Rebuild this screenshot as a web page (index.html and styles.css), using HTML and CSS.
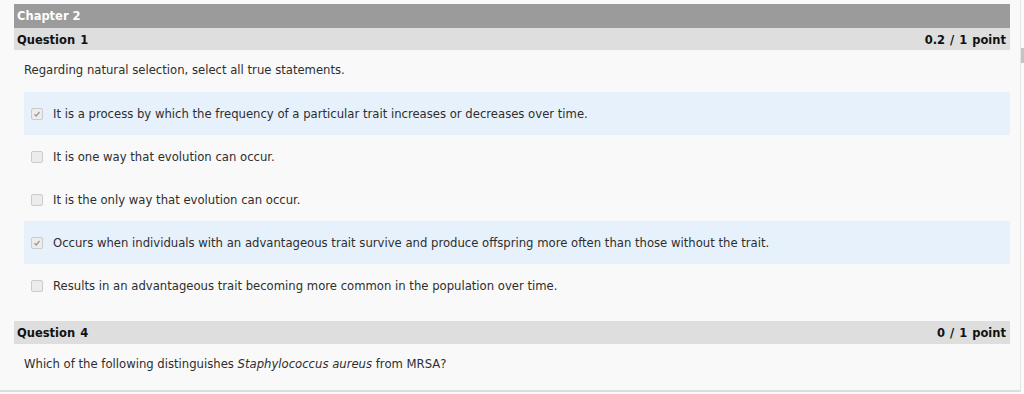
FILE: index.html
```html
<!DOCTYPE html>
<html lang="en">
<head>
    <meta charset="UTF-8">
    <title>Chapter 2 - Quiz</title>
    <link rel="stylesheet" href="styles.css">
</head>
<body>
    <div class="page">
        <div class="panel">
            <div class="chapter">Chapter 2</div>

            <div class="qhead">
                <span>Question 1</span>
                <span>0.2 / 1 point</span>
            </div>
            <p class="prompt">Regarding natural selection, select all true statements.</p>
            <div class="options">
                <div class="opt picked">
                    <span class="box"><svg viewBox="0 0 12 12"><path d="M3 6.2 L5 8.3 L9 3.6" /></svg></span>
                    It is a process by which the frequency of a particular trait increases or decreases over time.
                </div>
                <div class="opt">
                    <span class="box"></span>
                    It is one way that evolution can occur.
                </div>
                <div class="opt">
                    <span class="box"></span>
                    It is the only way that evolution can occur.
                </div>
                <div class="opt picked">
                    <span class="box"><svg viewBox="0 0 12 12"><path d="M3 6.2 L5 8.3 L9 3.6" /></svg></span>
                    Occurs when individuals with an advantageous trait survive and produce offspring more often than those without the trait.
                </div>
                <div class="opt">
                    <span class="box"></span>
                    Results in an advantageous trait becoming more common in the population over time.
                </div>
            </div>

            <div class="qhead q4">
                <span>Question 4</span>
                <span>0 / 1 point</span>
            </div>
            <p class="prompt">Which of the following distinguishes <i>Staphylococcus aureus</i> from MRSA?</p>
        </div>
        <div class="track"><div class="thumb"></div></div>
    </div>
</body>
</html>
```

FILE: styles.css
```css
body {
    margin: 0;
    padding: 0;
    background: #fafafa;
    font-family: "DejaVu Sans", Verdana, sans-serif;
    font-size: 11.65px;
    color: #2e2e2e;
}
.page{
    display: flex;
    height: 394px;
    overflow: hidden;
}
.panel{
    width: 1021px;
    height: 392px;
    box-sizing: border-box;
    padding: 4px 10px 0 14px;
    border-right: 1px solid #e6e6e6;
    border-bottom: 2px solid #dcdcdc;
    background: #f9f9f9;
}
.track{
    width: 3px;
}
.thumb{
    margin-top: 48px;
    height: 15px;
    background: #c4c4c4;
}
.chapter{
    height: 24px;
    line-height: 25px;
    padding-left: 3px;
    background: #9b9b9b;
    color: #fff;
    font-size: 11.5px;
    font-weight: bold;
}
.qhead{
    display: flex;
    justify-content: space-between;
    height: 22px;
    line-height: 24px;
    padding: 0 4px 0 3px;
    background: #dedede;
    color: #111;
    font-size: 11.5px;
    font-weight: bold;
    word-spacing: 1px;
}
.q4{
    height: 23px;
    line-height: 24px;
    margin-top: 14px;
}
.prompt{
    margin: 0;
    padding-left: 10px;
    height: 42px;
    line-height: 40px;
}
.options{
    margin-left: 10px;
}
.opt{
    display: flex;
    align-items: center;
    gap: 10px;
    height: 43px;
    padding-left: 7px;
}
.picked{
    background: #e7f1fc;
}
.box{
    width: 10px;
    height: 10px;
    border: 1px solid #cbcbcb;
    border-radius: 2px;
    background: #ececec;
    display: flex;
}
.box svg{
    width: 10px;
    height: 10px;
    fill: none;
    stroke: #9a9a9a;
    stroke-width: 1.6;
}
```
